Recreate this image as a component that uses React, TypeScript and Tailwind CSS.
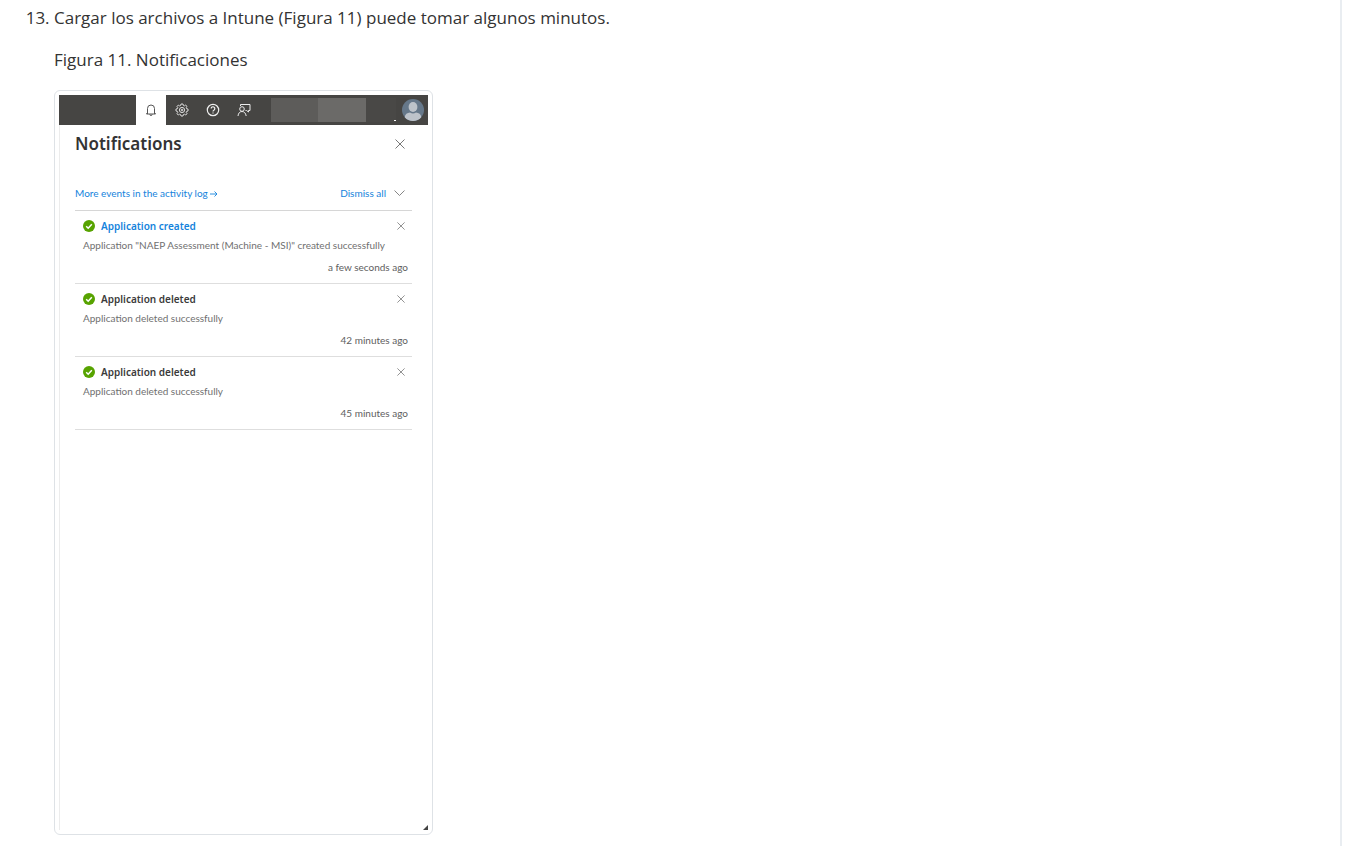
import { ReactNode } from "react";

interface Notice {
  id: number;
  title: string;
  text: string;
  time: string;
  isLink?: boolean;
}

const NOTICES: Notice[] = [
  {
    id: 1,
    title: "Application created",
    text: 'Application "NAEP Assessment (Machine - MSI)" created successfully',
    time: "a few seconds ago",
    isLink: true,
  },
  { id: 2, title: "Application deleted", text: "Application deleted successfully", time: "42 minutes ago" },
  { id: 3, title: "Application deleted", text: "Application deleted successfully", time: "45 minutes ago" },
];

function CloseIcon({ size }: { size: number }) {
  return (
    <svg width={size} height={size} viewBox="0 0 10 10" fill="none" stroke="#777" strokeWidth="1">
      <path d="M0.5 0.5l9 9M9.5 0.5l-9 9" />
    </svg>
  );
}

function CheckIcon() {
  return (
    <svg width="12" height="12" viewBox="0 0 12 12" className="shrink-0">
      <circle cx="6" cy="6" r="6" fill="#57a300" />
      <path d="M3.2 6.2l2 2 3.6-4" fill="none" stroke="#fff" strokeWidth="1.5" />
    </svg>
  );
}

function BellIcon() {
  return (
    <svg width="14" height="14" viewBox="0 0 14 14" fill="none" stroke="#555" strokeWidth="1">
      <path d="M2.5 11h9M3.5 11V5.5a3.5 3.5 0 0 1 7 0V11M2.5 11l1-1.5M11.5 11l-1-1.5M5.8 11.3a1.2 1.2 0 0 0 2.4 0" />
    </svg>
  );
}

function GearIcon() {
  return (
    <svg width="14" height="14" viewBox="0 0 14 14" fill="none" stroke="#dcdcdc" strokeWidth="1" strokeLinejoin="round">
      <path d="M6 1h2l.4 1.5 1 .4 1.3-.8 1.3 1.3-.8 1.3.4 1L13 6v2l-1.4.4-.4 1 .8 1.3-1.3 1.3-1.3-.8-1 .4L8 13H6l-.4-1.4-1-.4-1.3.8L2 10.7l.8-1.3-.4-1L1 8V6l1.4-.3.4-1L2 3.4l1.3-1.3 1.3.8 1-.4z" />
      <circle cx="7" cy="7" r="2.6" />
      <circle cx="7" cy="7" r="0.8" />
    </svg>
  );
}

function HelpIcon() {
  return (
    <svg width="14" height="14" viewBox="0 0 14 14" fill="none" stroke="#f0f0f0" strokeWidth="1.2">
      <circle cx="7" cy="7" r="5.7" />
      <path d="M5.2 5.6a1.8 1.8 0 1 1 2.9 1.4C7.3 7.5 7 7.7 7 8.5M7 9.4v1.2" />
    </svg>
  );
}

function FeedbackIcon() {
  return (
    <svg width="14" height="14" viewBox="0 0 14 14" fill="none" stroke="#ececec" strokeWidth="1">
      <path d="M3.5 3V1.5H13v6h-1.5V9L9.5 7.500h-1" />
      <circle cx="5" cy="6" r="2.300" />
      <path d="M1 13c.3-2.800 1.800-4.500 4-4.500s3.700 1.700 4.200 4.500" />
    </svg>
  );
}

function ArrowIcon() {
  return (
    <svg width="8" height="6" viewBox="0 0 8 6" fill="none" stroke="#1583dc" strokeWidth="0.9" className="mt-0.5">
      <path d="M0 3h7M4.5 0.5L7 3 4.5 5.5" />
    </svg>
  );
}

function AvatarIcon() {
  return (
    <svg width="22" height="22" viewBox="0 0 22 22">
      <circle cx="11" cy="11" r="11" fill="#66788a" />
      <ellipse cx="11" cy="8" rx="4.4" ry="5" fill="#bdc3ca" />
      <path d="M2.7 18.2C3 15.2 5.2 13.8 8 13.6c2 1.2 4 1.2 6 0 2.8.2 5 1.6 5.3 4.6A11 11 0 0 1 2.7 18.2z" fill="#bdc3ca" />
    </svg>
  );
}

function BarButton({ label, active, children }: { label: string; active?: boolean; children: ReactNode }) {
  return (
    <button
      type="button"
      aria-label={label}
      className={`flex h-full items-center justify-center ${active ? "w-[30px] bg-white" : "w-[31px]"}`}
    >
      {children}
    </button>
  );
}

function TopBar() {
  return (
    <div className="flex h-[30px] items-center bg-[#464543] pl-[77px] pr-1">
      <BarButton label="Notifications" active>
        <BellIcon />
      </BarButton>
      <BarButton label="Settings">
        <GearIcon />
      </BarButton>
      <BarButton label="Help">
        <HelpIcon />
      </BarButton>
      <BarButton label="Feedback">
        <FeedbackIcon />
      </BarButton>
      {/* redacted account details */}
      <div className="ml-3 h-6 w-[47px] bg-[#5d5c5a]" />
      <div className="h-6 w-12 bg-[#6b6a68]" />
      <div className="flex h-6 w-[30px] items-end justify-end bg-[#494846] pb-px">
        <div className="h-px w-0.5 bg-white" />
      </div>
      <button type="button" aria-label="Account" className="ml-auto">
        <AvatarIcon />
      </button>
    </div>
  );
}

function NoticeItem({ notice }: { notice: Notice }) {
  return (
    <li className="h-[73px] border-b border-[#dedede] pl-2 pr-1 pt-[7px]">
      <div className="flex h-4 items-center gap-[6px] text-[10px] leading-4 font-semibold font-['Noto_Sans',sans-serif]">
        <CheckIcon />
        {notice.isLink ? (
          <a href="#" className="text-[#1583dc]">{notice.title}</a>
        ) : (
          <span className="text-[#3b3b3b]">{notice.title}</span>
        )}
        <button type="button" aria-label="Dismiss" className="ml-auto mr-[3px]">
          <CloseIcon size={8} />
        </button>
      </div>
      <p className="mt-[3px] whitespace-nowrap text-[10px] leading-4 text-[#707070]">{notice.text}</p>
      <p className="mt-[6px] text-right text-[10px] leading-4 text-[#606060]">{notice.time}</p>
    </li>
  );
}

function NotificationsPanel() {
  return (
    <div className="relative w-[379px] max-w-full rounded-md border border-[#dee2e6] bg-white p-1 font-['Lato',sans-serif]">
      <TopBar />
      <div className="min-h-[705px] border-l border-[#ececec] pl-[15px] pr-4">
        <div className="flex h-[38px] items-center justify-between pr-[7px]">
          <h2 className="font-['Noto_Sans',sans-serif] text-[17px] font-semibold text-[#333]">Notifications</h2>
          <button type="button" aria-label="Close">
            <CloseIcon size={10} />
          </button>
        </div>
        <div className="mt-[22px] flex h-[26px] items-start border-b border-[#d6d6d6] pr-[7px] text-[10px] leading-4 text-[#1583dc]">
          <a href="#" className="flex items-center gap-0.5">
            More events in the activity log
            <ArrowIcon />
          </a>
          <button type="button" className="ml-auto flex items-center gap-2">
            Dismiss all
            <svg width="11" height="6" viewBox="0 0 11 6" fill="none" stroke="#777" strokeWidth="0.9">
              <path d="M0.5 0.5l5 5 5-5" />
            </svg>
          </button>
        </div>
        <ul>
          {NOTICES.map((notice) => (
            <NoticeItem key={notice.id} notice={notice} />
          ))}
        </ul>
      </div>
      <svg width="5" height="5" viewBox="0 0 5 5" className="absolute bottom-1 right-1">
        <path d="M5 0v5H0z" fill="#444" />
      </svg>
    </div>
  );
}

export default function App() {
  return (
    <div className="min-h-screen bg-white pr-2 font-['Open_Sans',sans-serif] text-[17px] leading-[26px] text-[#333]">
      <main className="min-h-screen border-r-2 border-[#e9edf1] pt-[5px]">
        <ol start={13} className="list-decimal pl-[54px]">
          <li>
            <p>Cargar los archivos a Intune (Figura 11) puede tomar algunos minutos.</p>
            <p className="mb-[17px] mt-4">Figura 11. Notificaciones</p>
            <NotificationsPanel />
          </li>
        </ol>
      </main>
    </div>
  );
}
